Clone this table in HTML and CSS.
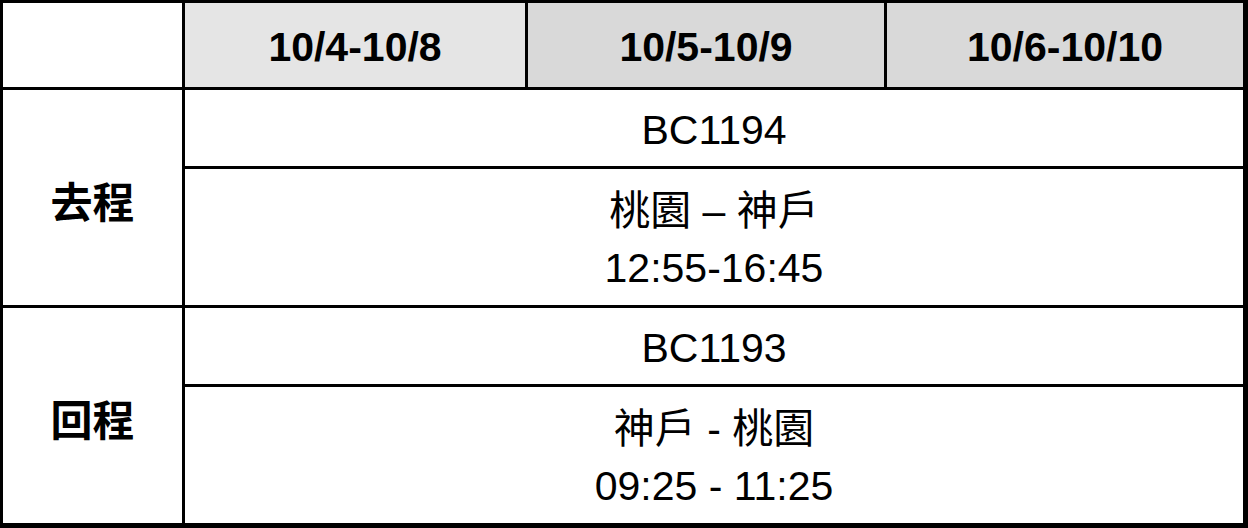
FILE: index.html
```html
<!DOCTYPE html>
<html lang="zh-Hant">
<head>
<meta charset="utf-8">
<title>航班資訊</title>
<link rel="stylesheet" href="styles.css">
</head>
<body>
<div class="table">
  <div class="cell corner"></div>
  <div class="cell head head-light">10/4-10/8</div>
  <div class="cell head">10/5-10/9</div>
  <div class="cell head">10/6-10/10</div>

  <div class="cell label label-out">去程</div>
  <div class="cell wide">BC1194</div>
  <div class="cell wide route">桃園 – 神戶<br>12:55-16:45</div>

  <div class="cell label label-back">回程</div>
  <div class="cell wide">BC1193</div>
  <div class="cell wide route">神戶 - 桃園<br>09:25 - 11:25</div>
</div>
</body>
</html>
```

FILE: styles.css
```css
html, body {
  margin: 0;
  padding: 0;
  background: #ffffff;
}

.table {
  display: grid;
  grid-template-columns: 179px 340px 356px 356px;
  grid-template-rows: 84px 76px 136px 76px 136px;
  gap: 3px;
  padding: 3px 5px 5px 3px;
  background: #000000;
  width: 1248px;
  height: 528px;
  box-sizing: border-box;
  font-family: "Liberation Sans", "Noto Sans CJK TC", sans-serif;
  font-size: 41px;
  color: #000000;
}

.cell {
  background: #ffffff;
  display: flex;
  align-items: center;
  justify-content: center;
  text-align: center;
  padding-top: 5px;
  box-sizing: border-box;
}

.corner {
  padding-top: 0;
}

.head {
  background: #d9d9d9;
  font-weight: bold;
  padding-top: 4px;
}

.head-light {
  background: #e5e5e5;
}

.label {
  font-weight: bold;
  font-size: 42px;
  grid-column: 1;
  padding-top: 4px;
}

.label-out {
  grid-row: 2 / span 2;
}

.label-back {
  grid-row: 4 / span 2;
}

.wide {
  grid-column: 2 / span 3;
}

.route {
  line-height: 57px;
}
```
